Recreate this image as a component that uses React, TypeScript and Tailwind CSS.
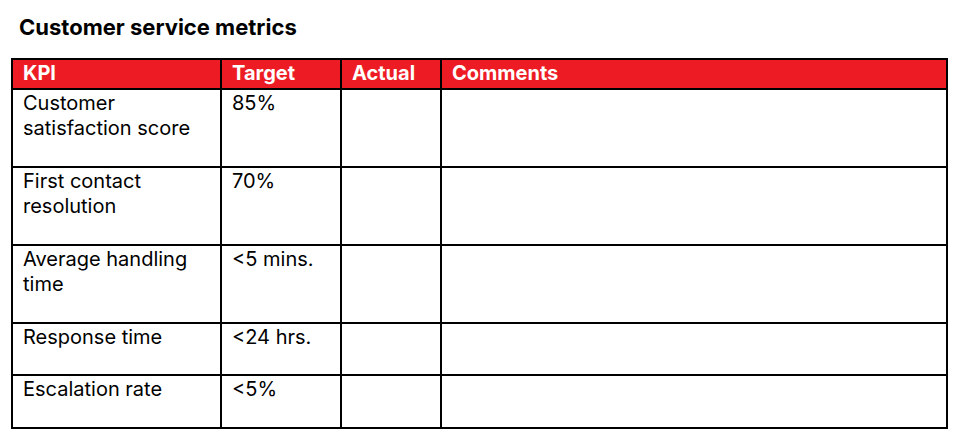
import React from "react";

const rows = [
  { kpi: "Customer satisfaction score", target: "85%", h: "h-[78px]" },
  { kpi: "First contact resolution", target: "70%", h: "h-[78px]" },
  { kpi: "Average handling time", target: "<5 mins.", h: "h-[78px]" },
  { kpi: "Response time", target: "<24 hrs.", h: "h-[52px]" },
  { kpi: "Escalation rate", target: "<5%", h: "h-[53px]" },
];

export default function App() {
  return (
    <div className="w-[958px] h-[435px] bg-white text-black font-['Inter','Liberation_Sans',sans-serif]">
      <div className="pt-[13px] pl-[19px] text-[22px] font-bold leading-[28px]">Customer service metrics</div>
      <table className="ml-[11px] mt-[17px] border-collapse table-fixed w-[937px]">
        <colgroup>
          <col className="w-[209px]" />
          <col className="w-[120px]" />
          <col className="w-[100px]" />
          <col />
        </colgroup>
        <thead>
          <tr className="h-[30px] bg-[#ED1C24] text-white text-[20px] font-bold">
            <th className="border-2 border-black text-left align-top px-[10px] pt-0 leading-[26px]">KPI</th>
            <th className="border-2 border-black text-left align-top px-[10px] pt-0 leading-[26px]">Target</th>
            <th className="border-2 border-black text-left align-top px-[10px] pt-0 leading-[26px]">Actual</th>
            <th className="border-2 border-black text-left align-top px-[10px] pt-0 leading-[26px]">Comments</th>
          </tr>
        </thead>
        <tbody>
          {rows.map((r) => (
            <tr key={r.kpi} className={`${r.h} text-[20px]`}>
              <td className="border-2 border-black align-top px-[10px] pt-[1px] leading-[25px]">{r.kpi}</td>
              <td className="border-2 border-black align-top px-[10px] pt-[1px] leading-[25px]">{r.target}</td>
              <td className="border-2 border-black align-top"></td>
              <td className="border-2 border-black align-top"></td>
            </tr>
          ))}
        </tbody>
      </table>
    </div>
  );
}
